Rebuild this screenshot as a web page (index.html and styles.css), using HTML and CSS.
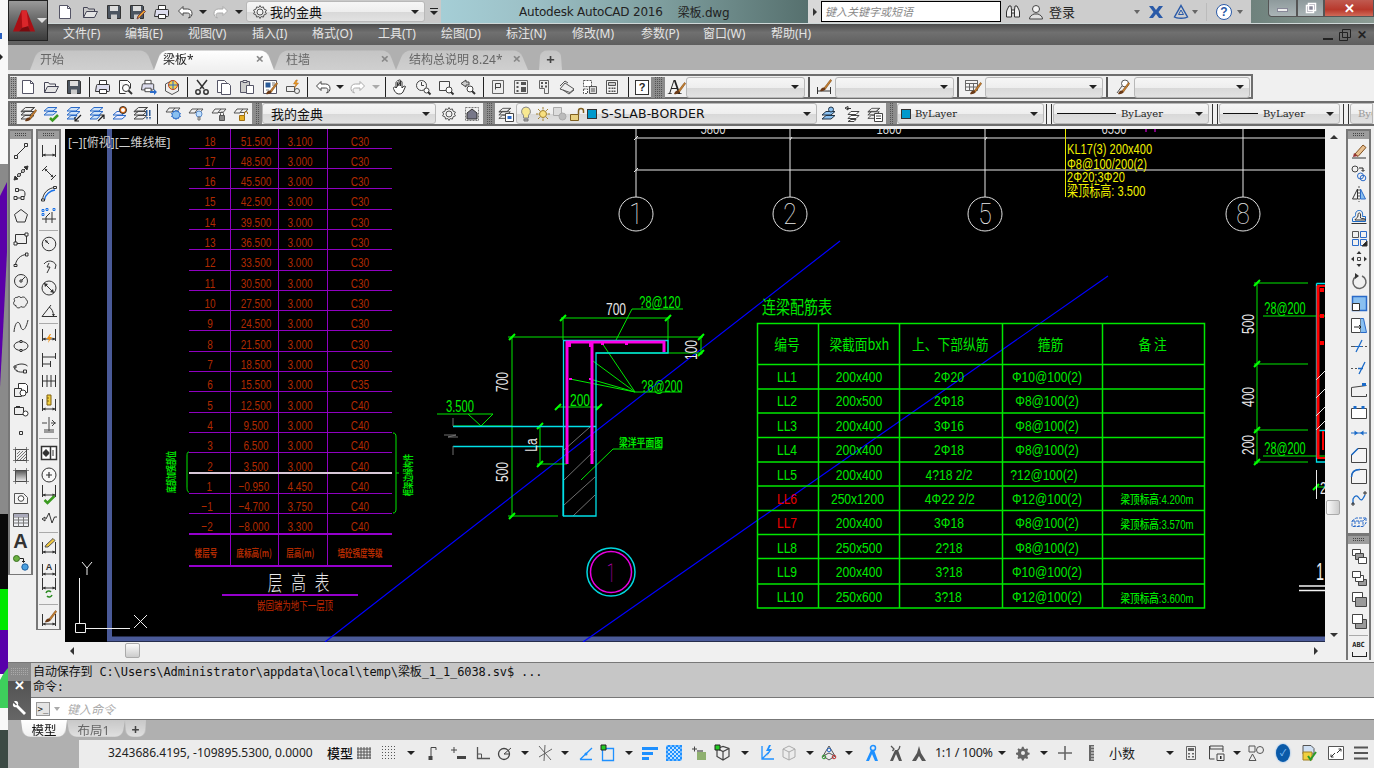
FILE: index.html
```html
<!DOCTYPE html>
<html lang="zh">
<head>
<meta charset="utf-8">
<title>Autodesk AutoCAD 2016 梁板.dwg</title>
<link rel="stylesheet" href="styles.css">
</head>
<body>
<svg class="defs" width="0" height="0">
  <symbol id="new" viewBox="0 0 16 16"><path d="M2.500 1.500h8l3 3v10h-11z" fill="#fff" stroke="#556"/><path d="M10.500 1.500v3h3" stroke="#556"/></symbol>
  <symbol id="open" viewBox="0 0 16 16"><path d="M1.500 13.500v-10h4l1 1.500h6v2.500" stroke="#445"/><path d="M1.500 13.500l3-6h11l-3 6z" fill="#e4e4e4" stroke="#445"/></symbol>
  <symbol id="save" viewBox="0 0 16 16"><path d="M1.500 1.500h12l1 1v12h-13z" fill="#4c5560" stroke="#333"/><path d="M4 2h8v5H4z" fill="#ddd" stroke="none"/><path d="M5 10.500h6V15H5z" fill="#ccc" stroke="none"/></symbol>
  <symbol id="print" viewBox="0 0 16 16"><path d="M4.500 6V1.500h7V6" fill="#fff"/><path d="M1.500 6.500q0-1 1-1h11q1 0 1 1v5q0 1-1 1h-13z" fill="#dde"/><path d="M4.500 10.500h7v4h-7z" fill="#fff"/></symbol>
  <symbol id="undo" viewBox="0 0 16 16"><path d="M6 2.500L1.500 7 6 11.500V9h4.500c1.500 0 2.500.8 2.500 2s-.5 2-1.500 3c2.500-.5 3.500-2.500 3.500-4.500 0-3-2-4.500-4.500-4.500H6z" fill="#fff" stroke="#444"/></symbol>
  <symbol id="redo" viewBox="0 0 16 16"><path d="M10 2.500L14.500 7 10 11.500V9H5.500C4 9 3 9.800 3 11s.5 2 1.500 3C2 13.500 1 11.500 1 9.500c0-3 2-4.500 4.500-4.500H10z" fill="#fff" stroke="#aaa"/></symbol>
  <symbol id="gear" viewBox="0 0 16 16"><circle cx="8" cy="8" r="3" fill="#f0f0f0" stroke="#555"/><path d="M8 1.500l1.200 2 2.200-.6.600 2.200 2.500 1.100-1.200 1.800 1.200 1.800-2.500 1.100-.6 2.200-2.200-.6L8 14.500l-1.200-2-2.200.6-.6-2.200-2.500-1.100L2.700 8 1.500 6.200 4 5.100l.6-2.200 2.200.6z" stroke="#555"/></symbol>
  <symbol id="stack" viewBox="0 0 16 16"><path d="M5.500 1.500h9l-4 3.500h-9zM1.500 5l-.5.800 4 0M10.500 5l4-3.500M5 5.500h9l-4 3.500H1z" stroke="#444" fill="#eee"/><path d="M5 9.500h9l-4 3.500H1z" stroke="#444" fill="#eee"/></symbol>
  <symbol id="layb" viewBox="0 0 16 16"><path d="M7 9.500l3-3.500h5l-3 3.500z" fill="#eee" stroke="#555"/><path d="M1 10l3-4h6" stroke="#555"/><path d="M1 10h6" stroke="#555"/></symbol>
  <symbol id="dimf" viewBox="0 0 16 16"><path d="M1.500 2v12M14.500 2v12M1.500 12h13" stroke="#333"/><path d="M1.500 12l3-1.500v3zM14.500 12l-3-1.500v3z" fill="#333" stroke="none"/></symbol>
  <symbol id="brush" viewBox="0 0 16 16"><path d="M8 12l6.500-8.500 1.200 1L9.500 13z" fill="#c9802e" stroke="#7a4a18" stroke-width=".6"/><path d="M4 15c1-2 1.500-3.500 4-3.500 1 .5 1.500 1.200 1.500 2C8 15 6 15.500 4 15z" fill="#6b3a17" stroke="none"/></symbol>
</svg>

<aside class="desk">
  <svg width="8" height="768" viewBox="0 0 8 768">
    <path d="M0 0h8v768H0z" fill="#f8f8f8"/>
    <path d="M0 164h8v350H0z" fill="#8a8a8a"/>
    <path d="M0 196L7 182v70l-4 80-3 55z" fill="#5a00a8"/>
    <path d="M0 514h8v75H0z" fill="#0a0a0a"/>
    <path d="M0 589h8v41H0z" fill="#00e800"/>
    <path d="M0 630h8v44H0z" fill="#5800aa"/>
    <path d="M0 680Q4 672 8 668v40H0z" fill="#3ecf5c"/>
    <path d="M0 730h8v38H0z" fill="#3c4a44"/>
    <path d="M0 33h2v6H0z" fill="#2a60c0"/>
    <path d="M0 54l3 3-3 3z" fill="#222"/>
  </svg>
</aside>

<div class="app">
  <div class="logo">
    <svg width="26" height="26" viewBox="0 0 26 26"><path d="M0 25L9.500 1h6L25 25h-5.500L17 19l-7 2-3 4z" fill="#a80f14"/><path d="M9.500 1h6l2 18-7 2z" fill="#d9262a"/><path d="M7 25l3-4 7-2 2.500 6z" fill="#7a0a0e"/></svg>
    <i class="c lite"></i>
  </div>

  <header class="titlebar">
    <div class="qat">
      <svg class="i b16"><use href="#new"/></svg>
      <svg class="i b16"><use href="#open"/></svg>
      <svg class="i b16"><use href="#save"/></svg>
      <svg class="i b16" viewBox="0 0 16 16"><use href="#save" width="16" height="16"/><path d="M8 15l1-3 6-6 1.500 1.500-6 6z" fill="#e8a030" stroke="#744"/></svg>
      <svg class="i b16"><use href="#print"/></svg>
      <svg class="i b16"><use href="#undo"/></svg>
      <i class="c"></i>
      <svg class="i b16"><use href="#redo"/></svg>
      <i class="c"></i>
      <div class="combo qcombo"><svg class="i"><use href="#gear"/></svg><span>我的金典</span><i class="c"></i></div>
      <span class="qmore"><i class="bar"></i><i class="c"></i></span>
    </div>
    <div class="wintitle"><span>Autodesk AutoCAD 2016</span><span>梁板.dwg</span></div>
    <div class="info">
      <span class="arrowbox"><i class="tri-r"></i></span>
      <span class="search">键入关键字或短语</span>
      <svg class="i ibino" viewBox="0 0 16 16"><path d="M2 6l2-4h2l.5 4v7h-5v-5zM14 6l-2-4h-2l-.5 4v7h5v-5zM6.500 6h3v3h-3z" fill="#eee" stroke="#333"/></svg>
      <svg class="i iuser" viewBox="0 0 16 16"><circle cx="8" cy="5" r="3.500" fill="#f4f4f4" stroke="#444"/><path d="M1.500 15c0-3 2.500-4 4.500-5h4c2 1 4.500 2 4.500 5z" fill="#e0e0e0" stroke="#444"/></svg>
      <span class="login">登录</span>
      <i class="c c1"></i>
      <svg class="i ix" viewBox="0 0 16 16"><path d="M1 2h4l3 4 3-4h4l-4.500 6L15 14h-4l-3-4-3 4H1l4.500-6z" fill="#2a5aa8" stroke="none"/></svg>
      <svg class="i ia" viewBox="0 0 16 16"><path d="M8 1.500L14.500 13c-2 1.500-11 1.500-13 0z" stroke="#2a5aa8" stroke-width="1.500"/><path d="M8 6l2.500 4.500h-5z" stroke="#2a5aa8"/></svg>
      <i class="c c2"></i>
      <i class="vsep"></i>
      <span class="qhelp">?</span>
      <i class="c c3"></i>
    </div>
    <div class="winctrl">
      <span class="wbtn wmin"><i></i></span>
      <span class="wbtn wres"><svg width="12" height="12" viewBox="0 0 12 12"><path d="M3.500 1.500h7v7h-7zM1.500 3.500h7v7h-7z" stroke="#fff" stroke-width="1.500" fill="#889"/></svg></span>
      <span class="wbtn wclose">✕</span>
    </div>
  </header>

  <nav class="menubar">
    <span class="m">文件(F)</span><span class="m">编辑(E)</span><span class="m">视图(V)</span><span class="m">插入(I)</span><span class="m">格式(O)</span><span class="m">工具(T)</span><span class="m">绘图(D)</span><span class="m">标注(N)</span><span class="m">修改(M)</span><span class="m">参数(P)</span><span class="m">窗口(W)</span><span class="m">帮助(H)</span>
    <span class="mdi"><i class="mdi-min"></i><svg width="12" height="12" viewBox="0 0 12 12"><path d="M3.500 .5h8v8h-8zM.5 3.500h8v8h-8z" stroke="#222" fill="none"/></svg><b>✕</b></span>
  </nav>

  <div class="tabbar">
    <div class="tab t0"><span>开始</span></div>
    <div class="tab t1 on"><span>梁板*</span><em>×</em></div>
    <div class="tab t2"><span>柱墙</span><em>×</em></div>
    <div class="tab t3"><span>结构总说明 8.24*</span><em>×</em></div>
    <div class="tab t4"><strong>+</strong></div>
  </div>

  <div class="tbarea">
    <div class="tb row1">
      <i class="grip"></i>
      <svg class="i"><use href="#new"/></svg>
      <svg class="i"><use href="#open"/></svg>
      <svg class="i"><use href="#save"/></svg>
      <i class="s"></i>
      <svg class="i"><use href="#print"/></svg>
      <svg class="i" viewBox="0 0 16 16"><path d="M2.500 1.500h8l3 3v5M2.500 1.500v13h6" fill="#fff"/><circle cx="9" cy="9" r="3.500" fill="#fff"/><path d="M11.500 11.500l3.500 3.500" stroke-width="2"/></svg>
      <svg class="i" viewBox="0 0 16 16"><use href="#print" width="14" height="14"/><path d="M9 12h4v-2l3 3-3 3v-2H9z" fill="#2a6ac8" stroke="none"/></svg>
      <svg class="i" viewBox="0 0 16 16"><path d="M1.500 5l6.500-3.500L14.500 5v7L8 15.500 1.500 12z" fill="#eee" stroke="#555"/><circle cx="9" cy="6" r="4.500" fill="#f0d050" stroke="#c04020"/><path d="M9 2v8M5 6h8" stroke="#2a6ac8"/></svg>
      <i class="s"></i>
      <svg class="i" viewBox="0 0 16 16"><path d="M3 1l7 9M13 1L6 10" stroke-width="1.500"/><circle cx="4" cy="13" r="2.200" stroke-width="1.500"/><circle cx="12" cy="13" r="2.200" stroke-width="1.500"/></svg>
      <svg class="i" viewBox="0 0 16 16"><path d="M1.500 1.500h7l2 2v10h-9z" fill="#fff" stroke="#556"/><path d="M5.500 4.500h7l2 2v9h-9z" fill="#fff" stroke="#556"/></svg>
      <svg class="i" viewBox="0 0 16 16"><path d="M1.500 2.500h9v11h-9z" fill="#ccc" stroke="#556"/><path d="M4 1.500h4v2H4z" fill="#eee" stroke="#556"/><path d="M7.500 6.500h7v8h-7z" fill="#fff" stroke="#556"/></svg>
      <svg class="i" viewBox="0 0 16 16"><path d="M1.500 1.500h13v13h-13z" fill="#fff" stroke="#556"/><path d="M3.500 3.500h5v5h-5z" fill="#2a5a98" stroke="none"/><path d="M10 4h3M10 6h3M4 11h3" stroke="#777"/><use href="#brush" width="16" height="16"/></svg>
      <svg class="i" viewBox="0 0 16 16"><path d="M1.500 7.500h8v5h-8z" fill="#eee" stroke="#555"/><circle cx="12" cy="12" r="2.500" stroke="#555"/><path d="M11 1L8.500 5H11L9.500 9l4-5h-2.500l1.500-3z" fill="#f0a020" stroke="#b06010" stroke-width=".5"/></svg>
      <i class="s"></i>
      <svg class="i"><use href="#undo"/></svg>
      <i class="c"></i>
      <svg class="i"><use href="#redo"/></svg>
      <i class="c dim"></i>
      <i class="s"></i>
      <svg class="i" viewBox="0 0 16 16"><path d="M4 9V3.500c0-1 1.500-1 1.500 0V7m0-5c0-1 1.500-1 1.500 0v5m0-5.500c0-1 1.500-1 1.500 0V7m0-4c0-1 1.500-1 1.500 0v6c1-1.500 3-2.500 3.500-1.500L11 13c-1 2-4 2.500-6 1.500S2 11 1.500 9.500c-.5-1.500 1.500-2 2.500-.5z" fill="#fff" stroke="#333"/></svg>
      <svg class="i" viewBox="0 0 16 16"><circle cx="6.500" cy="6.500" r="5" fill="#f4f4f4" stroke="#444"/><path d="M6.500 3v3.500H9" stroke="#444"/><circle cx="11.500" cy="11.500" r="2.500" fill="#fff" stroke="#444"/><path d="M13 13l2.500 2.500" stroke-width="2"/></svg>
      <svg class="i" viewBox="0 0 16 16"><path d="M1.500 2.500h10v9h-10z" fill="#f4f4f4" stroke="#444"/><circle cx="11" cy="11" r="3" fill="#fff" stroke="#444"/><path d="M13 13l2.500 2.500" stroke-width="2"/></svg>
      <svg class="i" viewBox="0 0 16 16"><path d="M6 1L1 4.500 6 8V6h3v-3H6z" fill="#ccc" stroke="#444"/><circle cx="10" cy="10" r="3" fill="#fff" stroke="#444"/><path d="M12 12l3 3" stroke-width="2"/></svg>
      <i class="s"></i>
      <svg class="i" viewBox="0 0 16 16"><path d="M2.500 1.500h11v13h-11z" fill="#eee" stroke="#666"/><path d="M5.500 4.500h5v4h-5M5.500 4.500v6" stroke="#444"/></svg>
      <svg class="i" viewBox="0 0 16 16"><path d="M1.500 1.500h13v13h-13z" fill="#eee" stroke="#666"/><path d="M3.500 3h2v2h-2zM3.500 7h2v2h-2zM3.500 11h2v2h-2zM8 3h5v3H8zM8 8h5v5H8z" fill="#555" stroke="none"/></svg>
      <svg class="i" viewBox="0 0 16 16"><path d="M3.500 1.500h9v13h-4v-5h-5z" fill="#eee" stroke="#666"/><path d="M5 3h2v2H5zM9 3h2v2H9zM5 6.500h2v2H5zM9 6.500h2v2H9z" fill="#555" stroke="none"/></svg>
      <svg class="i" viewBox="0 0 16 16"><path d="M1 10l5-6 9 6-4 3.500z" fill="#eee" stroke="#555"/><path d="M1 7l5-5 3 2M4 11l6 4 5-4" stroke="#555"/></svg>
      <svg class="i" viewBox="0 0 16 16"><path d="M1.500 1.500h8v6h-8zM1.500 10h4v4.500h-4z" fill="#fff" stroke="#555" stroke-dasharray="2 1"/><path d="M7.500 7.500h7v7h-7z" fill="#ddd" stroke="#555"/><path d="M9 10h4M9 12h4" stroke="#555"/></svg>
      <svg class="i" viewBox="0 0 16 16"><path d="M2.500 1.500h11v13h-11z" fill="#f4f4f4" stroke="#555"/><path d="M4.500 3.500h7v3h-7z" fill="#ccc" stroke="#555"/><path d="M4.500 8.500h2v1.500h-2zM7.500 8.500h2v1.500h-2zM10 8.500h1.500v1.500H10zM4.500 11.500h2V13h-2zM7.500 11.500h2V13h-2zM10 11.500h1.500V13H10z" fill="#555" stroke="none"/></svg>
      <i class="s"></i>
      <span class="helpbox">?</span>
      <i class="grip2"></i>
      <span class="glyph">A<svg class="over" width="16" height="16"><use href="#brush"/></svg></span>
      <div class="combo"><i class="c"></i></div>
      <i class="s s2"></i>
      <svg class="i" viewBox="0 0 16 16"><path d="M1.500 8v7M14.500 8v7M1.500 12h13" stroke="#333"/><use href="#brush" width="16" height="16" y="-3"/></svg>
      <div class="combo"><i class="c"></i></div>
      <i class="s s2"></i>
      <svg class="i" viewBox="0 0 16 16"><path d="M.5 1.500h12v10H.5z" fill="#f4f4f4" stroke="#666"/><path d="M.5 1.500h12v3H.5zM4.500 4.500v7M8.500 4.500v7M.5 8h12" stroke="#666"/><use href="#brush" width="16" height="16" x="1"/></svg>
      <div class="combo"><i class="c"></i></div>
      <i class="s s2"></i>
      <svg class="i" viewBox="0 0 16 16"><circle cx="11" cy="4.500" r="3.500" fill="#fff" stroke="#555"/><path d="M8 7l-5 7" stroke="#555"/><use href="#brush" width="16" height="16"/></svg>
      <div class="combo"><i class="c"></i></div>
    </div>

    <div class="tb row2">
      <i class="grip"></i>
      <svg class="i" viewBox="0 0 16 16"><use href="#stack" width="16" height="16"/><use href="#brush" width="16" height="16" x="1"/></svg>
      <svg class="i" viewBox="0 0 16 16"><g stroke="#2a6ac8"><path d="M5 1.500h9l-4 3.500H1zM5 5.500h9l-4 3.500H1z" fill="#cfe3f8"/></g><path d="M7 12l2.500 2.500L15 9" stroke="#3a9a20" stroke-width="2.500"/></svg>
      <svg class="i" viewBox="0 0 16 16"><g stroke="#2a6ac8"><path d="M5 1.500h9l-4 3.500H1zM5 5.500h9l-4 3.500H1zM5 9.500h6L8 13H1z" fill="#cfe3f8"/></g><path d="M15 9l-6 6m0-4v4h4" stroke="#222" stroke-width="1.200"/></svg>
      <svg class="i" viewBox="0 0 16 16"><g stroke="#2a6ac8"><path d="M5 1.500h9l-4 3.500H1zM5 5.500h9l-4 3.500H1zM5 9.500h6L8 13H1z" fill="#cfe3f8"/></g><path d="M9 15l6-6m-4 0h4v4" stroke="#222" stroke-width="1.200"/></svg>
      <svg class="i" viewBox="0 0 16 16"><g stroke="#2a6ac8"><path d="M5 5.500h9l-4 3.500H1zM5 9.500h9l-4 3.500H1z" fill="#eef"/></g><circle cx="11" cy="4" r="3.500" fill="#f07010"/><circle cx="11" cy="4" r="2" fill="#fff" stroke="none"/></svg>
      <svg class="i" viewBox="0 0 16 16"><use href="#stack" width="16" height="16" x="-2"/><path d="M11 4h1.500v6H11zM14 4h1.500v6H14zM11 11l1 3 1-3zM14 11l1 3 1-3z" fill="#2a5a98" stroke="none"/></svg>
      <i class="s"></i>
      <svg class="i" viewBox="0 0 16 16"><use href="#layb" width="16" height="16" y="-4"/><path d="M11 8l.8 1.500 1.600-.4.400 1.600 1.700.8-1.100 1.500 1.100 1.500-1.700.5-.4 1.500-1.600-.4-.8 1.400-.8-1.400-1.600.4-.4-1.500-1.700-.5 1.100-1.500-1.100-1.500 1.700-.8.400-1.600 1.600.4z" fill="#8ac0f0" stroke="#2a6ac8" transform="translate(0 -4)"/></svg>
      <svg class="i" viewBox="0 0 16 16"><use href="#layb" width="16" height="16" y="-3"/><circle cx="11" cy="8" r="3" fill="#bfe0ff" stroke="#5a8ac8"/><path d="M10 11h2v3h-2z" fill="#ccc" stroke="#777"/></svg>
      <svg class="i" viewBox="0 0 16 16"><use href="#layb" width="16" height="16" y="-3"/><path d="M8.500 9.500h5v5h-5z" fill="#888" stroke="#555"/><path d="M9.500 9.500v-2a1.500 1.500 0 013 0v2" stroke="#555"/></svg>
      <svg class="i" viewBox="0 0 16 16"><use href="#layb" width="16" height="16" y="-3"/><path d="M6.500 9.500h5v5h-5z" fill="#e8b020" stroke="#a07010"/><path d="M11.500 9.500v-2.500a1.500 1.500 0 013 0v1" stroke="#a07010"/></svg>
      <i class="grip2"></i>
      <div class="combo tcombo"><span>我的金典</span><i class="c"></i></div>
      <svg class="i"><use href="#gear"/></svg>
      <svg class="i" viewBox="0 0 16 16"><path d="M1.500 1.500h13v13h-13z" stroke="#777" stroke-dasharray="2 1"/><path d="M3 7l5-4 5 4v6H3z" fill="#778"/></svg>
      <i class="grip2"></i>
      <svg class="i" viewBox="0 0 16 16"><use href="#stack" width="14" height="14" y="1"/><path d="M7.500 7.500h8v8h-8z" fill="#fff" stroke="#444"/><path d="M9.500 10h4v3h-4z" fill="#2a6ac8" stroke="none"/></svg>
      <div class="combo lcombo">
        <svg class="i" viewBox="0 0 16 16"><path d="M8 1a4.500 4.500 0 00-2.500 8.200V12h5V9.200A4.500 4.500 0 008 1z" fill="#f8e890" stroke="#888"/><path d="M6 13h4v2H6z" fill="#aaa" stroke="#777"/></svg>
        <svg class="i" viewBox="0 0 16 16"><circle cx="8" cy="8" r="3.500" fill="#f8e080" stroke="#a08030"/><path d="M8 1v2.500M8 12.500V15M1 8h2.500M12.500 8H15M3 3l1.800 1.800M11.200 11.200L13 13M13 3l-1.800 1.800M4.800 11.200L3 13" stroke="#a08030"/></svg>
        <svg class="i" viewBox="0 0 16 16"><path d="M1.500 1.500h8v8h-8z" fill="#ddd" stroke="#aaa"/><circle cx="10.500" cy="10.500" r="3.500" fill="#bbb" stroke="#aaa"/></svg>
        <svg class="i" viewBox="0 0 16 16"><path d="M1.500 8.500h8v6h-8z" fill="#e8d080" stroke="#806020"/><path d="M9.500 8.500V5a2.500 2.500 0 015 0v2" stroke="#806020" stroke-width="1.500"/></svg>
        <i class="sw"></i>
        <span class="laytxt">S-SLAB-BORDER</span>
        <i class="c"></i>
      </div>
      <svg class="i" viewBox="0 0 16 16"><g stroke="#234"><path d="M5 5.500h9l-4 3.500H1zM5 9.500h9l-4 3.500H1z" fill="#8ac0f0"/></g><circle cx="10" cy="3.500" r="2.500" fill="#8ac0f0" stroke="#234"/></svg>
      <svg class="i" viewBox="0 0 16 16"><path d="M7 5.500h8l-3 3H4zM7 9.500h8l-3 3H4zM7 13.500h5l-2 2H4z" fill="#fff" stroke="#444"/><path d="M1 2l3-1.500V4zM3 2.500h4" stroke="#333"/></svg>
      <svg class="i" viewBox="0 0 16 16"><use href="#stack" width="14" height="14" y="1"/><path d="M7.500 7.500h8v8h-8z" fill="#fff" stroke="#444"/><path d="M9 10h5M9 12.500h5" stroke="#444"/></svg>
      <i class="grip2"></i>
      <div class="combo bcombo"><i class="sw"></i><span>ByLayer</span><i class="c"></i></div>
      <i class="s dbl"></i>
      <div class="combo bcombo"><i class="ln l60"></i><span>ByLayer</span><i class="c"></i></div>
      <i class="s dbl"></i>
      <div class="combo bcombo"><i class="ln l35"></i><span>ByLayer</span><i class="c"></i></div>
      <i class="s dbl"></i>
      <div class="combo bcombo off"><span>ByColor</span></div>
    </div>
  </div>

  <div class="work">
    <div class="leftdock">
      <div class="vbar">
        <i class="hgrip"></i>
        <svg class="i" viewBox="0 0 16 16"><path d="M3 13L13 3"/><path d="M1.500 12.500h3v3h-3zM11.500.5h3v3h-3z" fill="#eee"/></svg>
        <svg class="i" viewBox="0 0 16 16"><path d="M2 14L14 2"/><circle cx="6" cy="10" r="1.500" fill="#eee"/><circle cx="10" cy="6" r="1.500" fill="#eee"/><path d="M1 15l1-4 3 3zM15 1l-4 1 3 3z" fill="#333"/></svg>
        <svg class="i" viewBox="0 0 16 16"><path d="M3 12h6M5 4h4c4 0 4 8 0 8"/><path d="M1 10.500h3v3H1zM2.500 2.500h3v3h-3zM8 10.500h3v3H8z" fill="#eee"/></svg>
        <svg class="i" viewBox="0 0 16 16"><path d="M8 1.500l6.500 5-2.500 7.500H4L1.500 6.500z" fill="#eee"/></svg>
        <svg class="i" viewBox="0 0 16 16"><path d="M2.500 4.500h11v9h-11z" fill="#eee"/><path d="M12 3h3v3h-3zM1 12h3v3H1z" fill="#fff"/></svg>
        <svg class="i" viewBox="0 0 16 16"><path d="M2.500 14C3 8 8 4 13 3.500"/><path d="M1 13.500h3v2H1zM12.500 2h2.500v3h-2.500z" fill="#eee"/></svg>
        <svg class="i" viewBox="0 0 16 16"><circle cx="8" cy="8" r="6.500" fill="#eee"/><path d="M8 8l4-4"/><path d="M7 7h2v2H7z" fill="#fff"/></svg>
        <svg class="i" viewBox="0 0 16 16"><path d="M4 2.500c1.500-1.500 3.500-1 4 .5 1-1.500 4.500-1.500 5 1.500 2 1 2 4 0 5 0 2.500-3 3.500-5 2-1 2-5 2-5-1-3 0-3-4-1-4.500-2-2 0-4 2-3.500z" fill="#eee"/></svg>
        <svg class="i" viewBox="0 0 16 16"><path d="M1 15C2 4 6 3 7.500 9s5 5 7.500-6"/></svg>
        <svg class="i" viewBox="0 0 16 16"><ellipse cx="8" cy="8" rx="7" ry="4.500" fill="#eee"/><path d="M7 2.500h2v2H7zM7 11.500h2v2H7z" fill="#fff"/></svg>
        <svg class="i" viewBox="0 0 16 16"><path d="M13 11.500C5 13.500 1 10 1.500 7.500 2 4 11 2.500 14.500 6"/><path d="M3 9.500l1.500 1.500" /><path d="M10.500 10h3v3h-3zM1 6h2v2H1z" fill="#eee"/></svg>
        <svg class="i" viewBox="0 0 16 16"><path d="M5.500 1.500h7l2 2v7h-9z" fill="#fff"/><path d="M1.500 6.500h7v8h-7z" fill="#eee"/><circle cx="10" cy="11" r="3" fill="#fff"/></svg>
        <svg class="i" viewBox="0 0 16 16"><path d="M1.500 4.500h9v7h-9z" fill="#eee"/><circle cx="12.500" cy="10.500" r="2.500" fill="#fff"/><path d="M3 3.500h4"/></svg>
        <svg class="i" viewBox="0 0 16 16"><path d="M6.500 6.500h3v3h-3z"/></svg>
        <svg class="i" viewBox="0 0 16 16"><path d="M2.500 2.500h11v11h-11z" fill="#eee"/><path d="M4 7l3-3M4 10l6-6M4 13l9-9M7 13l6-6M10 13l3-3" stroke="#777"/><path d="M0 2.500h16M2.500 0v16M13.500 0v16M0 13.500h16" stroke="#555" stroke-width=".7"/></svg>
        <svg class="i" viewBox="0 0 16 16"><defs><linearGradient id="gr" x1="0" y1="0" x2="0" y2="1"><stop offset="0" stop-color="#555"/><stop offset="1" stop-color="#eee"/></linearGradient></defs><path d="M2.500 2.500h11v11h-11z" fill="url(#gr)"/><path d="M0 2.500h16M2.500 0v16M13.500 0v16M0 13.500h16" stroke="#555" stroke-width=".7"/></svg>
        <svg class="i" viewBox="0 0 16 16"><path d="M1.500 3.500h9l4 4v6h-13z" fill="#f4f4f4" stroke="#555"/><circle cx="8" cy="8.500" r="2.800" fill="#fff" stroke="#444"/></svg>
        <svg class="i" viewBox="0 0 16 16"><path d="M.5 1.500h15v13H.5z" fill="#eef0f4" stroke="#555"/><path d="M.5 5h15M.5 8h15M.5 11h15M5.500 5v9.500M10.500 5v9.500" stroke="#777"/><path d="M1 2h14v3H1z" fill="#aab" stroke="none"/></svg>
        <span class="bigA">A</span>
        <svg class="i" viewBox="0 0 16 16"><circle cx="3.500" cy="3.500" r="3" fill="#6ab040" stroke="#3a7020"/><path d="M7 3.500h3.500V7m-1.500-1l1.500 1.500L12 6" stroke="#222"/><circle cx="12" cy="12" r="3.200" fill="#4aa0e0" stroke="#2060a0"/></svg>
      </div>
      <div class="vbar">
        <i class="hgrip"></i>
        <svg class="i"><use href="#dimf"/></svg>
        <svg class="i" viewBox="0 0 16 16"><path d="M1 6l5-5M10 15l5-5M3.500 3.500l9 9"/><path d="M3.500 3.500l3 1-2 2zM12.500 12.500l-3-1 2-2z" fill="#333" stroke="none"/></svg>
        <svg class="i" viewBox="0 0 16 16"><path d="M1.500 14C2 7 7 2 14 1.500"/><path d="M3.500 14C4 9 9 4.500 14 4" stroke="#1a72e8" stroke-width="1.500"/><path d="M.5 13h3v2h-3zM12.500.5h3v2h-3z" fill="#eee"/></svg>
        <svg class="i" viewBox="0 0 16 16"><path d="M5 15V9M1 11h14M11 15V4M5 9l4-4" /><path d="M1 1.500h2v2H1zM5 .5h2v2H5zM12 .5h2v2h-2zM1 5.500h2v2H1z" stroke="#1a72e8"/></svg>
        <i class="vs"></i>
        <svg class="i" viewBox="0 0 16 16"><circle cx="8" cy="8" r="6.800" fill="#eee"/><path d="M8 8L4 4"/><path d="M4 4l3 1-2 2z" fill="#333" stroke="none"/></svg>
        <svg class="i" viewBox="0 0 16 16"><path d="M3 6A7 7 0 0 1 15 7M15 7l-1 4M8 5L6 9h3l-3 6"/></svg>
        <svg class="i" viewBox="0 0 16 16"><circle cx="8" cy="8" r="7" fill="#eee"/><path d="M3 3l10 10"/><path d="M3 3l4 1-3 3zM13 13l-4-1 3-3z" fill="#333" stroke="none"/></svg>
        <svg class="i" viewBox="0 0 16 16"><path d="M1 14.500h15M1 14.500L10 3M8 5c3 1.500 4.500 5 4.500 9.500"/><path d="M11 12l1.500 2.500 1.500-2.500z" fill="#333" stroke="none"/></svg>
        <i class="vs"></i>
        <svg class="i" viewBox="0 0 16 16"><use href="#dimf" width="16" height="16" y="-3"/><path d="M9 4L5.500 9H8l-1 4 4-6H8.500L10 4z" fill="#f09010" stroke="none"/></svg>
        <svg class="i" viewBox="0 0 16 16"><path d="M1.500 1v14M1.500 5h13M1.500 12h8M14.500 1v6M9.500 9v6"/></svg>
        <svg class="i" viewBox="0 0 16 16"><path d="M1.500 2v12M6 2v12M10 2v12M14.500 2v12M1.500 8h13"/></svg>
        <svg class="i" viewBox="0 0 16 16"><use href="#dimf" width="16" height="16" y="2"/><path d="M6 0h4v10H6z" fill="#f0d040" stroke="#806010"/><path d="M6 3h2M6 6h2" stroke="#806010"/></svg>
        <svg class="i" viewBox="0 0 16 16"><path d="M8 0v14M3 13h10M3 15h10M1 6h5M10 6h5M11 3l3 3-3 3" stroke="#444"/></svg>
        <i class="vs"></i>
        <svg class="i" viewBox="0 0 16 16"><path d="M.5 1.500h15v13H.5zM9.500 1.500v13" fill="#fff" stroke-width="1.500"/><circle cx="5" cy="8" r="2.500" fill="#333"/><path d="M5 4v8M1.500 8h7" /><path d="M12 5v6"/></svg>
        <svg class="i" viewBox="0 0 16 16"><circle cx="8" cy="8" r="7" fill="#f8f8f8"/><path d="M8 5v6M5 8h6" stroke-width="1.200"/></svg>
        <svg class="i" viewBox="0 0 16 16"><use href="#dimf" width="16" height="16" y="-5"/><path d="M3.500 12l3 3 7-7" stroke="#3a9a20" stroke-width="2.500"/></svg>
        <svg class="i" viewBox="0 0 16 16"><path d="M5 9l3-6 3 10 2.500-6h2.500M1 9l3-2v4z"/></svg>
        <i class="vs"></i>
        <svg class="i" viewBox="0 0 16 16"><use href="#dimf" width="16" height="16" y="2"/><path d="M4 9l1-2 7-6.500 2 2L7 9z" fill="#f0c840" stroke="#555"/></svg>
        <svg class="i" viewBox="0 0 16 16"><use href="#dimf" width="16" height="16" y="2"/><text x="8" y="10" class="mini">A</text></svg>
        <svg class="i" viewBox="0 0 16 16"><use href="#dimf" width="16" height="16" y="-6"/><path d="M5 11a3 3 0 015-1M11 13a3 3 0 01-5 1" stroke="#2a8a20" stroke-width="1.500"/></svg>
        <i class="vs"></i>
        <svg class="i" viewBox="0 0 16 16"><use href="#dimf" width="16" height="16" y="2"/><use href="#brush" width="16" height="16" y="-3"/></svg>
      </div>
    </div>

    <div class="center">
      <div class="viewrow">
        <svg class="cad" width="1260" height="513" viewBox="65 129 1260 513">
          <rect x="65" y="129" width="1260" height="513" fill="#000"/>
          <path d="M109.500 129V639H1325" class="frame"/>

          <!-- storey table -->
          <path class="pu" d="M189 148.500H392M189 168.500H392M189 188.500H392M189 209.500H392M189 229.500H392M189 249.500H392M189 270.500H392M189 290.500H392M189 310.500H392M189 330.500H392M189 351.500H392M189 371.500H392M189 391.500H392M189 412.500H392M189 432.500H392M189 452.500H392M189 493.500H392M189 513.500H392M230.500 129V566M278.500 129V566M327.500 129V566"/>
          <path class="pu2" d="M189 534H392M189 566H392M222 595H358"/>
          <path d="M189 473H392" class="wl"/>
          <text class="fl" transform="matrix(.74 0 0 1 210 0)"><tspan x="0" y="146">18</tspan><tspan x="0" y="166">17</tspan><tspan x="0" y="186">16</tspan><tspan x="0" y="206">15</tspan><tspan x="0" y="227">14</tspan><tspan x="0" y="247">13</tspan><tspan x="0" y="267">12</tspan><tspan x="0" y="288">11</tspan><tspan x="0" y="308">10</tspan><tspan x="0" y="328">9</tspan><tspan x="0" y="349">8</tspan><tspan x="0" y="369">7</tspan><tspan x="0" y="389">6</tspan><tspan x="0" y="410">5</tspan><tspan x="0" y="430">4</tspan><tspan x="0" y="450">3</tspan><tspan x="0" y="471">2</tspan><tspan x="-1" y="491">1</tspan><tspan x="-4" y="511">−1</tspan><tspan x="-4" y="531">−2</tspan></text>
          <text class="fl" transform="matrix(.74 0 0 1 256 0)"><tspan x="0" y="146">51.500</tspan><tspan x="0" y="166">48.500</tspan><tspan x="0" y="186">45.500</tspan><tspan x="0" y="206">42.500</tspan><tspan x="0" y="227">39.500</tspan><tspan x="0" y="247">36.500</tspan><tspan x="0" y="267">33.500</tspan><tspan x="0" y="288">30.500</tspan><tspan x="0" y="308">27.500</tspan><tspan x="0" y="328">24.500</tspan><tspan x="0" y="349">21.500</tspan><tspan x="0" y="369">18.500</tspan><tspan x="0" y="389">15.500</tspan><tspan x="0" y="410">12.500</tspan><tspan x="0" y="430">9.500</tspan><tspan x="0" y="450">6.500</tspan><tspan x="0" y="471">3.500</tspan><tspan x="-3" y="491">−0.950</tspan><tspan x="-3" y="511">−4.700</tspan><tspan x="-3" y="531">−8.000</tspan></text>
          <text class="fl" transform="matrix(.74 0 0 1 300 0)"><tspan x="0" y="146">3.100</tspan><tspan x="0" y="166">3.000</tspan><tspan x="0" y="186">3.000</tspan><tspan x="0" y="206">3.000</tspan><tspan x="0" y="227">3.000</tspan><tspan x="0" y="247">3.000</tspan><tspan x="0" y="267">3.000</tspan><tspan x="0" y="288">3.000</tspan><tspan x="0" y="308">3.000</tspan><tspan x="0" y="328">3.000</tspan><tspan x="0" y="349">3.000</tspan><tspan x="0" y="369">3.000</tspan><tspan x="0" y="389">3.000</tspan><tspan x="0" y="410">3.000</tspan><tspan x="0" y="430">3.000</tspan><tspan x="0" y="450">3.000</tspan><tspan x="0" y="471">3.000</tspan><tspan x="0" y="491">4.450</tspan><tspan x="0" y="511">3.750</tspan><tspan x="0" y="531">3.300</tspan></text>
          <text class="fl" transform="matrix(.74 0 0 1 360 0)"><tspan x="0" y="146">C30</tspan><tspan x="0" y="166">C30</tspan><tspan x="0" y="186">C30</tspan><tspan x="0" y="206">C30</tspan><tspan x="0" y="227">C30</tspan><tspan x="0" y="247">C30</tspan><tspan x="0" y="267">C30</tspan><tspan x="0" y="288">C30</tspan><tspan x="0" y="308">C30</tspan><tspan x="0" y="328">C30</tspan><tspan x="0" y="349">C30</tspan><tspan x="0" y="369">C30</tspan><tspan x="0" y="389">C35</tspan><tspan x="0" y="410">C40</tspan><tspan x="0" y="430">C40</tspan><tspan x="0" y="450">C40</tspan><tspan x="0" y="471">C40</tspan><tspan x="0" y="491">C40</tspan><tspan x="0" y="511">C40</tspan><tspan x="0" y="531">C40</tspan></text>
          <text class="flh" transform="scale(.72 1)"><tspan x="286" y="557">楼层号</tspan><tspan x="353">底标高(m)</tspan><tspan x="417">层高(m)</tspan><tspan x="500">墙砼强度等级</tspan></text>
          <text y="590" class="ttl" transform="matrix(.7 0 0 1 300 0)">层 高 表</text>
          <text y="610" class="flh sub" transform="matrix(.77 0 0 1 295 0)">嵌固端为地下一层顶</text>
          <path d="M189 452c-2 0-2 2-2 4v30c0 3 0 6 2 6M393 433c2 0 3 1 3 4v72c0 3-1 4-3 4M396 473h3" class="gr"/>
          <text transform="translate(175 472) rotate(-90) scale(.7 1)" class="vt">底部加强部位</text>
          <text transform="translate(412 475) rotate(-90) scale(.7 1)" class="vt">框架边缘构件</text>

          <!-- ucs -->
          <path class="ucs" d="M79.500 578V623M85 628.500H130M75.500 623.500h10v9h-10zM82 562l5 6 5-6M87 568v7M134 615l13 13M147 615l-13 13"/>
          <text x="68" y="147" class="vp">[−][俯视][二维线框]</text>

          <!-- diagonals -->
          <path d="M325 642L840 241M583 642L1108 276" class="bl"/>

          <!-- axis grid -->
          <path class="wh" d="M636 138H1325M636 170H1325M636 129V198M790 129V198M985 129V198M1243 129V198M634 140l4-4M790 140l2-3M985 140l2-3M634 172l4-4"/>
          <circle cx="636" cy="214" r="17" class="wc"/><circle cx="790" cy="214" r="17" class="wc"/><circle cx="985" cy="214" r="17" class="wc"/><circle cx="1243" cy="214" r="17" class="wc"/>
          <text class="ax" transform="matrix(.85 0 0 1 636 0)" x="0" y="224">1</text>
          <text class="ax" transform="matrix(.85 0 0 1 790 0)" x="0" y="224">2</text>
          <text class="ax" transform="matrix(.85 0 0 1 985 0)" x="0" y="224">5</text>
          <text class="ax" transform="matrix(.85 0 0 1 1243 0)" x="0" y="224">8</text>
          <text class="dimt" transform="matrix(.75 0 0 1 713 0)" x="0" y="134">5800</text>
          <text class="dimt" transform="matrix(.75 0 0 1 889 0)" x="0" y="134">1800</text>
          <text class="dimt" transform="matrix(.75 0 0 1 1114 0)" x="0" y="134">6550</text>
          <path d="M1065.500 129V197" class="ye"/>
          <path d="M1146 129v3M1155 129v3" class="mg1"/>
          <text class="yt" transform="matrix(.74 0 0 1 1067 0)"><tspan x="0" y="154">KL17(3) 200x400</tspan><tspan x="0" y="169">Φ8@100/200(2)</tspan><tspan x="0" y="182">2Φ20;3Φ20</tspan><tspan x="0" y="196">梁顶标高: 3.500</tspan></text>

          <!-- beam section -->
          <g class="gr">
            <path d="M561 318H670M563 318V340M668 318V353M508 337H703M512 337V516M508 516H558M596 353H703M701 337V355M512 426H453M558 407H599M537 464H567M540 426V464M437 414H493L481 426 468 414M632 309H683M632 309L615 342M635 392H682M635 392L593 361M635 392L602 343M635 392L570 379M635 392L590 379M613 449H662M613 449L581 480"/>
          </g>
          <path class="tk" d="M560 321l6-6M665 321l6-6M509 340l6-6M509 519l6-6M698 340l6-6M698 356l6-6M537 429l6-6M537 467l6-6M555 410l6-6M596 410l6-6"/>
          <path class="gy" d="M564 450L590 427M564 480L595 450M564 505L595 477M573 516L595 495"/>
          <path d="M563.500 340.500H668V353H596V516H563.500ZM453 426.500H596M453 446.500H563M563 446V516" class="cy"/>
          <path d="M453 418V426M453 446V455M444 435h12l-8 2h10" class="gy"/>
          <path d="M567 464V342H664V352M592 342V464" class="mg"/>
          <path d="M568 342h3v5h-3zM589 342h4v5h-4zM601 342h3v3h-3zM625 342h3v3h-3zM569 378h3v2h-3zM589 378h3v2h-3z" class="mgf"/>
          <text class="w15" transform="matrix(.75 0 0 1 616 0)" x="0" y="315">700</text>
          <text class="g14" transform="matrix(.68 0 0 1 660 0)" x="0" y="308">?8@120</text>
          <text class="g14" transform="matrix(.68 0 0 1 662 0)" x="0" y="392">?8@200</text>
          <text class="g14" transform="matrix(.75 0 0 1 580 0)" x="0" y="406">200</text>
          <text class="g14" transform="matrix(.7 0 0 1 460 0)" x="0" y="412">3.500</text>
          <text class="w15" transform="translate(508 382) rotate(-90) scale(.75 1)">700</text>
          <text class="w15" transform="translate(508 472) rotate(-90) scale(.75 1)">500</text>
          <text class="w15" transform="translate(697 350) rotate(-90) scale(.75 1)">100</text>
          <text class="w15" transform="translate(537 445) rotate(-90) scale(.75 1)">La</text>
          <text y="447" class="cg12" transform="matrix(.8 0 0 1 641 0)">梁洋平面图</text>
          <circle cx="611" cy="572" r="24" class="cyc"/><circle cx="611" cy="572" r="20.500" class="mgc"/>
          <text y="582" class="m1" transform="matrix(.6 0 0 1 611 0)">1</text>

          <!-- link-beam schedule -->
          <text y="314" class="cg18" transform="matrix(.78 0 0 1 797 0)">连梁配筋表</text>
          <path class="tbl" d="M757.500 323.500H1204.500V608H757.500ZM818.500 323V608M899.500 323V608M1002.500 323V608M1102.500 323V608M757 364.500H1205M757 389H1205M757 413H1205M757 437.500H1205M757 462H1205M757 486H1205M757 510.500H1205M757 534.500H1205M757 558.500H1205M757 584H1205"/>
          <text class="cg15" transform="scale(.85 1)"><tspan x="926" y="350">编号</tspan><tspan x="1011">梁截面bxh</tspan><tspan x="1118">上、下部纵筋</tspan><tspan x="1236">箍筋</tspan><tspan x="1356">备  注</tspan></text>
          <text class="rw" transform="matrix(.78 0 0 1 787 0)"><tspan x="0" y="382">LL1</tspan><tspan x="0" y="406">LL2</tspan><tspan x="0" y="431">LL3</tspan><tspan x="0" y="455">LL4</tspan><tspan x="0" y="480">LL5</tspan><tspan x="0" y="504" class="red">LL6</tspan><tspan x="0" y="528" class="red">LL7</tspan><tspan x="0" y="553">LL8</tspan><tspan x="0" y="577">LL9</tspan><tspan x="4" y="602">LL10</tspan></text>
          <text class="rw" transform="matrix(.78 0 0 1 859 0)"><tspan x="0" y="382">200x400</tspan><tspan x="0" y="406">200x500</tspan><tspan x="0" y="431">200x400</tspan><tspan x="0" y="455">200x400</tspan><tspan x="0" y="480">200x400</tspan><tspan x="-2" y="504">250x1200</tspan><tspan x="0" y="528">200x400</tspan><tspan x="0" y="553">250x500</tspan><tspan x="0" y="577">200x400</tspan><tspan x="0" y="602">250x600</tspan></text>
          <text class="rw" transform="matrix(.78 0 0 1 949 0)"><tspan x="0" y="382">2Φ20</tspan><tspan x="0" y="406">2Φ18</tspan><tspan x="0" y="431">3Φ16</tspan><tspan x="0" y="455">2Φ18</tspan><tspan x="0" y="480">4?18 2/2</tspan><tspan x="1" y="504">4Φ22 2/2</tspan><tspan x="0" y="528">3Φ18</tspan><tspan x="0" y="553">2?18</tspan><tspan x="0" y="577">3?18</tspan><tspan x="-1" y="602">3?18</tspan></text>
          <text class="rw" transform="matrix(.78 0 0 1 1047 0)"><tspan x="0" y="382">Φ10@100(2)</tspan><tspan x="0" y="406">Φ8@100(2)</tspan><tspan x="0" y="431">Φ8@100(2)</tspan><tspan x="0" y="455">Φ8@100(2)</tspan><tspan x="-4" y="480">?12@100(2)</tspan><tspan x="0" y="504">Φ12@100(2)</tspan><tspan x="0" y="528">Φ8@100(2)</tspan><tspan x="0" y="553">Φ8@100(2)</tspan><tspan x="0" y="577">Φ10@100(2)</tspan><tspan x="0" y="602">Φ12@100(2)</tspan></text>
          <text class="nt" transform="matrix(.8 0 0 1 1157 0)"><tspan x="0" y="504">梁顶标高:4.200m</tspan><tspan x="0" y="529">梁顶标高:3.570m</tspan><tspan x="0" y="603">梁顶标高:3.600m</tspan></text>

          <!-- right detail -->
          <path class="gr" d="M1257 282V464M1254 283H1308M1254 364H1308M1254 430H1308M1254 462H1308M1263 316H1325M1263 456H1325M1316 487H1325"/>
          <path class="tk" d="M1254 286l6-6M1254 367l6-6M1254 433l6-6M1254 465l6-6M1313 490l6-6"/>
          <path class="cy" d="M1316.500 283.500H1325M1316.500 283.500V462H1325M1316 430.500H1325"/>
          <path d="M1318 286V458" class="red4"/>
          <path d="M1317 286h8M1317 458h8M1323 431V450" class="red2"/>
          <path class="redf" d="M1320 288h4v4h-4zM1320 314h4v4h-4zM1320 341h4v4h-4z"/>
          <path class="wh" d="M1316 380l9-9M1316 398l9-9M1316 416l9-9M1316 430l9-9M1316.500 470V499"/>
          <path class="wh2" d="M1299 586H1325M1299 590.500H1325"/>
          <text class="w15" transform="translate(1254 324) rotate(-90) scale(.75 1)">500</text>
          <text class="w15" transform="translate(1254 397) rotate(-90) scale(.75 1)">400</text>
          <text class="w15" transform="translate(1254 445) rotate(-90) scale(.75 1)">200</text>
          <text class="g14" transform="matrix(.68 0 0 1 1285 0)" x="0" y="314">?8@200</text>
          <text class="g14" transform="matrix(.68 0 0 1 1285 0)" x="0" y="454">?8@200</text>
          <text class="w15l" transform="matrix(.75 0 0 1 1320 0)" x="0" y="494">2</text>
          <text class="w15l big" transform="matrix(.6 0 0 1 1316 0)" x="0" y="580">1</text>
        </svg>
        <div class="vscroll">
          <i class="up"></i>
          <i class="vthumb"></i>
          <i class="down"></i>
        </div>
      </div>
      <div class="hscroll">
        <i class="left"></i>
        <i class="hthumb"></i>
        <i class="right"></i>
      </div>
    </div>

    <div class="rightdock">
      <div class="vbar">
        <i class="hgrip"></i>
        <svg class="i" viewBox="0 0 16 16"><path d="M1 15h14" stroke="#333"/><path d="M4 11L12 2l3 2.500L7 13.500z" fill="#e8c090" stroke="#805020"/><path d="M2 14l1-4 4 3z" fill="#933" stroke="none"/></svg>
        <svg class="i" viewBox="0 0 16 16"><circle cx="4" cy="4" r="3" stroke="#444"/><path d="M8 3h4v3m-1.500-1l1.500 1.500L13.500 5" stroke="#222"/><circle cx="9.500" cy="11" r="3" stroke="#2a6ac8"/><circle cx="12" cy="13" r="2.800" stroke="#2a6ac8"/></svg>
        <svg class="i" viewBox="0 0 16 16"><path d="M8 0v16" stroke="#555" stroke-dasharray="2 1"/><path d="M6.500 3v10H1.500z" stroke="#333"/><path d="M9.500 3v10h5z" fill="#8ac0f0" stroke="#2a6ac8"/></svg>
        <svg class="i" viewBox="0 0 16 16"><path d="M1.500 13.500v-3c0-2 3-1 3-3s0-5 4-5 3 5 3 6h3v5z" stroke="#1a6ac8"/><path d="M.5 15.500h15M4 12c0-1.500 3-2 3-4s0-3 1.500-3 1 3.500 1 5 5-.5 5 2z" stroke="#333"/></svg>
        <svg class="i" viewBox="0 0 16 16"><path d="M1.500 1.500h6v6h-6z" stroke="#555"/><path d="M9.500 1.500h6v6h-6zM1.500 9.500h6v6h-6zM9.500 9.500h6v6h-6z" stroke="#2a6ac8"/><path d="M16 11v5h-5z" fill="#222"/></svg>
        <svg class="i" viewBox="0 0 16 16"><path d="M6.500 6.500h3v3h-3z" stroke="#444"/><path d="M8 0l2.500 3h-5zM8 16l2.500-3h-5zM0 8l3-2.500v5zM16 8l-3-2.500v5z" fill="#333" stroke="none"/></svg>
        <svg class="i" viewBox="0 0 16 16"><path d="M5 3.500a6.500 6.500 0 1 0 6-.5" stroke="#666" stroke-width="1.500"/><path d="M4 0v6l4-3z" fill="#333" stroke="none"/></svg>
        <svg class="i" viewBox="0 0 16 16"><path d="M1.500 1.500h14v14h-14z" fill="#8ac0f0" stroke="#2a6ac8" stroke-width="1.500"/><path d="M1.500 8.500h7v7h-7z" fill="#fff" stroke="#333"/></svg>
        <svg class="i" viewBox="0 0 16 16"><path d="M.5 1.500h9v14h-9z" fill="#fff" stroke="#444"/><path d="M9.500 1.500h3l3 14h-6" fill="#8ac0f0" stroke="#2a6ac8"/><path d="M3 10h7m-2-2l2 2-2 2" stroke="#222"/></svg>
        <svg class="i" viewBox="0 0 16 16"><path d="M0 8.500h4M11 8.500h1M14 8.500h2" stroke="#555"/><path d="M5 14L11 2" stroke="#1a6ac8" stroke-width="1.300"/><path d="M4 8.500h7" stroke="#1a6ac8"/></svg>
        <svg class="i" viewBox="0 0 16 16"><path d="M0 8.500h2M4 8.500h2" stroke="#555"/><path d="M7 8.500h5M8 14l6-12" stroke="#1a6ac8" stroke-width="1.300"/></svg>
        <svg class="i" viewBox="0 0 16 16"><path d="M.5 5.500l15-2M.5 14.500h15V12" stroke="#444"/><path d="M.5 5.500v9"  stroke="#444"/><path d="M11 1h4v3h-4z" fill="#1a6ac8" stroke="none"/></svg>
        <svg class="i" viewBox="0 0 16 16"><path d="M.5 5.500h15v10H.5z" fill="#fff" stroke="#444"/><path d="M2.500 3h3v3h-3zM10.500 3h3v3h-3z" fill="#1a6ac8" stroke="none"/></svg>
        <svg class="i" viewBox="0 0 16 16"><path d="M0 8h16" stroke="#1a6ac8"/><path d="M7 8L3.500 5.500v5zM9 8l3.500-2.500v5z" fill="#1a6ac8" stroke="none"/></svg>
        <svg class="i" viewBox="0 0 16 16"><path d="M.5 15.500V8L7 1.500h8.500v14z" fill="#f4f4f4" stroke="#444"/><path d="M.5 8L7 1.500" stroke="#1a6ac8" stroke-width="1.500"/></svg>
        <svg class="i" viewBox="0 0 16 16"><path d="M.5 15.500V9C.5 4 4 1.500 9 1.500h6.500v14z" fill="#f4f4f4" stroke="#444"/><path d="M.5 9C.5 4 4 1.500 9 1.500" stroke="#1a6ac8" stroke-width="1.500"/></svg>
        <svg class="i" viewBox="0 0 16 16"><path d="M2 14V9c2-4 4-4 6-1s3 3 6-3" stroke="#1a6ac8" stroke-width="1.300"/><path d="M1 13h2v2H1zM13 2h2v2h-2z" stroke="#333"/></svg>
        <svg class="i" viewBox="0 0 16 16"><path d="M1 9l4-3h10l-3 3v5.500H1zM1 9h11M15 6v5l-3 3.500M4 9v5M8 9v5" stroke="#2a6ac8" stroke-dasharray="3 1"/></svg>
      </div>
      <div class="vbar">
        <i class="hgrip"></i>
        <svg class="i" viewBox="0 0 16 16"><path d="M1.500 1.500h8v6h-8z" fill="#fff" stroke="#444"/><path d="M4.500 5.500h8v6h-8z" fill="#999" stroke="#444"/><path d="M7.500 9.500h8v6h-8z" fill="#fff" stroke="#444"/></svg>
        <svg class="i" viewBox="0 0 16 16"><path d="M7.500 9.500h8v6h-8z" fill="#999" stroke="#444"/><path d="M4.500 5.500h8v6h-8z" fill="#fff" stroke="#444"/><path d="M1.500 1.500h8v6h-8z" fill="#fff" stroke="#444"/></svg>
        <svg class="i" viewBox="0 0 16 16"><path d="M1.500 1.500h10v9h-10z" fill="#fff" stroke="#444"/><path d="M4.500 6.500h11v9h-11z" fill="#999" stroke="#444"/></svg>
        <svg class="i" viewBox="0 0 16 16"><path d="M4.500 6.500h11v9h-11z" fill="#999" stroke="#444"/><path d="M1.500 1.500h10v9h-10z" fill="#fff" stroke="#444"/></svg>
        <i class="vs"></i>
        <span class="abc">ABC<i></i></span>
      </div>
    </div>
  </div>

  <section class="cmd">
    <div class="cmdside">
      <i class="hgrip dark"></i>
      <b>✕</b>
      <svg width="16" height="16" viewBox="0 0 16 16"><path d="M2 1.500c3-1.500 5 .5 4 3.500l8 8-2 2-8-8C1.500 8 0 5 1.500 3L4 5.500 5 4.500z" fill="#fff"/></svg>
    </div>
    <div class="cmdmain">
      <div class="hist">
        <div>自动保存到 C:\Users\Administrator\appdata\local\temp\梁板_1_1_6038.sv$ ...</div>
        <div>命令:</div>
      </div>
      <div class="cmdin">
        <span class="prompt">&gt;_</span><i class="c dim"></i><span class="ph">键入命令</span>
      </div>
    </div>
  </section>

  <div class="layouttabs">
    <div class="ltab on"><span>模型</span></div>
    <div class="ltab"><span>布局1</span></div>
    <div class="ltab plus"><strong>+</strong></div>
  </div>

  <footer class="status">
    <span class="coords">3243686.4195, -109895.5300, 0.0000</span>
    <span class="st-model">模型</span>
    <svg class="i" viewBox="0 0 16 16"><path d="M1 2v12M4 2v12M7 2v12M10 2v12M13 2v12M0 4h14M0 7h14M0 10h14M0 13h14" stroke="#555"/></svg>
    <svg class="i" viewBox="0 0 16 16"><path d="M1 1.500h14M1 4.500h14M1 7.500h14M1 10.500h14M1 13.500h14" stroke="#555" stroke-dasharray="1 2"/></svg>
    <i class="c"></i>
    <svg class="i" viewBox="0 0 16 16"><path d="M6 13V2.500h5v2.500" stroke="#444"/><path d="M3.500 11h4v4h-4z" fill="#444" stroke="none"/></svg>
    <svg class="i" viewBox="0 0 16 16"><path d="M1 5h6M4 2v6" stroke="#444"/><path d="M7 11h9v3H7z" fill="#444" stroke="none"/></svg>
    <svg class="i" viewBox="0 0 16 16"><path d="M2.500 2v11.500H15" stroke="#555" stroke-width="1.300"/><path d="M2.500 9h4v4.500" stroke="#555"/></svg>
    <svg class="i" viewBox="0 0 16 16"><circle cx="7" cy="9" r="5.500" stroke="#444" stroke-width="1.300"/><path d="M7 9l7-6M7 9h5" stroke="#444"/></svg>
    <i class="c"></i>
    <svg class="i" viewBox="0 0 16 16"><path d="M2 1l12 14M8 0l-1 16M15 4L2 12" stroke="#666"/></svg>
    <i class="c"></i>
    <svg class="i" viewBox="0 0 16 16"><path d="M2 14.500L14 3M2 14.500h12" stroke="#1e90ff" stroke-width="1.300"/><circle cx="8" cy="9" r="1.500" fill="#1e90ff" stroke="none"/></svg>
    <svg class="i" viewBox="0 0 16 16"><path d="M2.500 3.500h11v12h-11z" stroke="#1e90ff" stroke-width="1.300"/><path d="M1 0h5v5H1z" fill="#22cc22" stroke="#222"/></svg>
    <i class="c"></i>
    <svg class="i" viewBox="0 0 16 16"><path d="M0 2h16v3H0zM0 7h11v3H0zM0 12h7v3H0z" fill="#1e90ff" stroke="none"/></svg>
    <svg class="i tr" viewBox="0 0 16 16"><path d="M1 1h14v14H1z"/></svg>
    <svg class="i" viewBox="0 0 16 16"><path d="M1 4h5M3.500 1.500v5" stroke="#444"/><path d="M6 5h6v2H6z" fill="#888" stroke="none"/><path d="M6 7h9v8H6z" fill="#8fb070" stroke="none"/></svg>
    <svg class="i" viewBox="0 0 16 16"><path d="M2 3.500L8 1.500l6 2v8l-6 3.500-6-3.500zM2 3.500l6 3 6-3M8 6.500v8" stroke="#444" stroke-width="1.200"/><path d="M0 0h5v5H0z" fill="#22cc22" stroke="#222"/></svg>
    <i class="c"></i>
    <svg class="i" viewBox="0 0 16 16"><path d="M3 1v13h12M3 14l7-7" stroke="#1e90ff" stroke-width="1.300"/><path d="M10 0L7 6h3l-2 5 5-7h-3l2-4z" fill="#1e90ff" stroke="none"/></svg>
    <svg class="i" viewBox="0 0 16 16"><path d="M2 4l6-3 6 3v8l-6 3-6-3zM2 4l6 3 6-3M8 7v8" stroke="#aaa"/></svg>
    <i class="c"></i>
    <svg class="i" viewBox="0 0 16 16"><path d="M8 1L2 11l6 4 6-4z" stroke="#555"/><path d="M2 11l6-3 6 3" stroke="#555"/><circle cx="3" cy="12" r="1.800" stroke="#2a9a2a"/><circle cx="13" cy="12" r="1.800" stroke="#c03030"/><circle cx="8" cy="5" r="1.800" stroke="#2a6ac8"/></svg>
    <i class="c"></i>
    <svg class="i" viewBox="0 0 16 16"><circle cx="9" cy="3" r="2.500" stroke="#1e90ff" stroke-width="1.500"/><path d="M7 5L2 16h3l3-7 3 7h3L10 5z" fill="#1e90ff" stroke="none"/></svg>
    <svg class="i" viewBox="0 0 16 16"><path d="M7 5L2 16h3l3-7 3 7h3L10 5z" fill="#555" stroke="none"/><path d="M3 1l3 3-1.500 2M12 1l-1 3-3 3" stroke="#555" stroke-width="1.300"/></svg>
    <svg class="i" viewBox="0 0 16 16"><path d="M8 1l-2 7-5 8h4l3-5 3 5h4l-5-8z" fill="#555" stroke="none"/></svg>
    <span class="scale">1:1 / 100%</span>
    <i class="c"></i>
    <svg class="i" viewBox="0 0 16 16"><path d="M7 1h2l.5 2 1.700.7L13 2.700 14.300 4l-1 1.800.7 1.700 2 .5v2l-2 .5-.7 1.700 1 1.800L13 15.300l-1.800-1-1.700.7-.5 2h-2l-.5-2-1.700-.7-1.800 1L1.700 14l1-1.800-.7-1.700-2-.5V8l2-.5.7-1.700-1-1.800L3 2.700l1.800 1 1.700-.7z" fill="#666" stroke="none" transform="translate(1 1) scale(.85)"/><circle cx="8" cy="8" r="2" fill="#eee" stroke="none"/></svg>
    <i class="c"></i>
    <svg class="i" viewBox="0 0 16 16"><path d="M8 1v14M1 8h14" stroke="#666" stroke-width="1.600"/></svg>
    <svg class="i" viewBox="0 0 16 16"><path d="M6 0h5v16H6z" fill="#666" stroke="none"/><path d="M8 2h3M8 5h3M8 8h3M8 11h3M8 14h3" stroke="#eee"/></svg>
    <span class="unit">小数</span>
    <i class="c"></i>
    <svg class="i" viewBox="0 0 16 16"><path d="M3.500 1.500h9v13h-9z" fill="#eee" stroke="#666"/><path d="M5 3h6v3H5zM5 8h2v1.500H5zM9 8h2v1.500H9zM5 11h2v1.500H5zM9 11h2v1.500H9z" fill="#666" stroke="none"/></svg>
    <svg class="i" viewBox="0 0 16 16"><path d="M1 1h13v3H1zM.5 1v13h5M14 4v3" stroke="#444"/><path d="M8 9h7v6.500H8z" fill="#eee" stroke="#444"/><path d="M11 11h1.500v3H11z" fill="#222" stroke="none"/></svg>
    <i class="c"></i>
    <svg class="i" viewBox="0 0 16 16"><path d="M1 1h6v6H1z" stroke="#555"/><circle cx="12" cy="5" r="3.500" stroke="#555"/><path d="M4.500 9l3.500 6.500H1z" stroke="#555"/></svg>
    <span class="bluecirc">✓</span>
    <svg class="i" viewBox="0 0 16 16"><path d="M2 .5h8l3 3V9H2z" fill="#cfe0f4" stroke="#555"/><path d="M2 7h9v8H2z" fill="#f0d040" stroke="#a08020"/><path d="M7 11l2.500 3.500L15 7" stroke="#2a9a2a" stroke-width="2"/></svg>
    <svg class="i" viewBox="0 0 16 16"><path d="M.5 1.500h15v13H.5z" fill="#fff" stroke="#555"/><path d="M3 12l4-4M3 12V9.500M3 12h2.500M13 4L9 8M13 4v2.500M13 4h-2.500" stroke="#333"/></svg>
    <svg class="i" viewBox="0 0 16 16"><path d="M1 2.500h14M1 8h14M1 13.500h14" stroke="#555" stroke-width="2.200"/></svg>
  </footer>
</div>
</body>
</html>
```
FILE: styles.css
```css
*{box-sizing:border-box}
html,body{margin:0;padding:0}
body{display:flex;width:1374px;height:768px;overflow:hidden;background:#f0f0f0;font-family:"Noto Sans","Noto Sans CJK SC",sans-serif;font-size:12px;color:#222}
i,em,b,strong{font-style:normal;display:block}
.defs{position:absolute}
.desk{width:8px;flex:none;line-height:0}
.app{position:relative;width:1366px;flex:none;display:flex;flex-direction:column;height:768px}

.i{width:16px;height:16px;display:block;fill:none;stroke:#333;stroke-width:1;justify-self:center;align-self:center;overflow:visible;flex:none}
.c{width:0;height:0;border-left:4px solid transparent;border-right:4px solid transparent;border-top:4px solid #222;justify-self:center;align-self:center;flex:none}
.c.dim{border-top-color:#aaa}
.c.lite{border-top-color:#ddd;border-left-width:5px;border-right-width:5px;border-top-width:5px}
.mini{font:700 9px "Liberation Sans",sans-serif;text-anchor:middle;fill:#333;stroke:none}

.logo{position:absolute;left:0;top:0;width:40px;height:41px;background:linear-gradient(#9a9a9a,#6a6a6a 45%,#3c3c3c);border:1px solid #222;z-index:5;display:flex;align-items:center;padding-left:4px;gap:1px}

.titlebar{height:24px;display:flex;flex:none;border-bottom:1px solid #cfd8d8;background:#c8c8c8}
.qat{width:393px;margin-left:40px;background:#c9c9c9;display:grid;grid-template-columns:26px 24px 23px 24px 25px 22px 14px 22px 14px 180px 15px;align-items:center;padding-left:4px}
.qcombo{height:20px;gap:2px;justify-content:flex-start;padding:0 3px 0 1px;margin:0}
.qcombo span{font-size:13px;color:#111}
.qcombo .c{margin-left:auto}
.qmore{display:flex;flex-direction:column;align-items:center;gap:2px}
.qmore .bar{width:8px;height:1px;background:#222}
.wintitle{width:367px;background:linear-gradient(90deg,#a5ced6,#9cc0c6 25%,#7e9e9e 60%,#56706e);display:flex;padding-left:78px;gap:15px;align-items:center;font:12px "DejaVu Sans","Noto Sans CJK SC",sans-serif;letter-spacing:-.2px;color:#222}
.info{width:443px;background:#cdcdcd;display:flex;align-items:center;position:relative}
.arrowbox{width:13px;height:23px;display:flex;align-items:center;justify-content:center;background:#d8d8d8}
.tri-r{width:0;height:0;border-top:4px solid transparent;border-bottom:4px solid transparent;border-left:4px solid #333}
.search{width:180px;height:21px;background:#fff;border:1px solid #000;font:italic 11px/19px "Noto Sans CJK SC",sans-serif;color:#888;padding-left:3px}
.ibino{margin-left:4px}
.iuser{margin-left:7px}
.login{margin-left:5px;font-size:13px;color:#222}
.c1{margin-left:59px;border-top-color:#666;border-left-width:3px;border-right-width:3px}
.ix{margin-left:8px}
.ia{margin-left:9px}
.c2{margin-left:3px;border-top-color:#666;border-left-width:3px;border-right-width:3px}
.vsep{width:1px;height:18px;background:#bbb;margin-left:8px}
.qhelp{margin-left:9px;width:16px;height:16px;border:1.500px solid #2a5aa8;border-radius:50%;color:#2a5aa8;font:700 12px/14px "Liberation Sans",sans-serif;text-align:center;background:#fff}
.c3{margin-left:5px;border-top-color:#666;border-left-width:3px;border-right-width:3px}
.winctrl{flex:1;background:linear-gradient(90deg,#6f827d,#8c9c94);display:flex;padding-left:17px;align-items:flex-start}
.wbtn{height:17px;display:flex;align-items:center;justify-content:center;border:1px solid #555;border-top:0;color:#fff}
.wmin{width:29px;background:linear-gradient(#8e9a9c,#aab4b6);border-radius:0 0 0 4px}
.wmin i{width:11px;height:4px;background:#eee;margin-top:3px;border:1px solid #889}
.wres{width:27px;background:linear-gradient(#8e9a9c,#aab4b6)}
.wclose{width:50px;background:linear-gradient(#c05a50,#b8392c 60%,#d06a58);font-size:13px;font-weight:700}

.menubar{height:21px;flex:none;display:flex;align-items:center;background:linear-gradient(#4c4c4c,#707070 40%,#5e5e5e);color:#e4e4e4;padding-left:55px;position:relative}
.m{width:63px;font-size:12px;white-space:nowrap;line-height:1;margin-top:-2px}
.m:nth-child(1){width:62px}
.m:nth-child(3){width:64px}
.m:nth-child(4){width:60px}
.m:nth-child(5){width:66px}
.m:nth-child(7){width:65px}
.m:nth-child(8){width:66px}
.m:nth-child(9){width:69px}
.m:nth-child(10){width:62px}
.m:nth-child(11){width:68px}
.mdi{margin-left:auto;display:flex;align-items:center;gap:6px;padding-right:7px;color:#222}
.mdi-min{width:10px;height:2px;background:#222;margin-top:8px}
.mdi b{font-size:12px}

.tabbar{height:25px;flex:none;background:#b0b0b0;display:flex;align-items:flex-end;padding-left:22px}
.tab{position:relative;height:23px;display:flex;align-items:center;justify-content:space-between;color:#666;font-size:12px;z-index:0;flex:none}
.tab::before{content:"";position:absolute;inset:0;background:linear-gradient(#c4c4c4,#cfcfcf);border-radius:8px 8px 0 0;transform:perspective(40px) rotateX(14deg);transform-origin:bottom;z-index:-1}
.tab em{font-size:15px;font-weight:700;color:#888;line-height:1}
.tab.on{color:#222;z-index:1}
.tab.on::before{background:linear-gradient(#fff,#f0f0f0)}
.t0{width:124px;padding-left:10px}
.t1{width:120px;padding:0 10px 0 9px}
.t2{width:122px;padding:0 7px 0 12px}
.t3{width:132px;padding:0 7px 0 13px}
.t4{width:23px;margin-left:11px;justify-content:center;color:#444}
.t4 strong{font-size:15px}

.tbarea{height:59px;flex:none;background:#f0f0f0;padding-top:4px;display:flex;flex-direction:column;gap:2px;overflow:hidden}
.tb{height:25px;border:2px solid #6e6e6e;display:grid;align-items:center;background:#f0f0f0}
.row1{width:1245px;grid-template-columns:7px 22px 24px 22px 8px 20px 24px 23px 23px 8px 21px 24px 22px 24px 21px 8px 23px 12px 24px 12px 6px 24px 22px 23px 22px 8px 22px 24px 22px 24px 22px 22px 10px 18px 14px 21px 120px 6px 23px 120px 6px 24px 119px 6px 24px 1fr}
.row2{width:1366px;border-right:0;grid-template-columns:7px 22px 23px 23px 23px 23px 23px 7px 24px 22px 23px 22px 10px 175px 23px 23px 12px 21px 302px 22px 23px 23px 11px 148px 8px 157px 9px 122px 9px 1fr}
.grip{height:21px;width:7px;background:conic-gradient(#555 25%,transparent 0) 2px 0/2px 2px,#9c9c9c}
.grip2{height:21px;width:100%;background:conic-gradient(#555 25%,transparent 0) 0 0/2px 2px content-box,#8c8c8c;padding:0 3px}
.s{width:1px;height:20px;background:#222;justify-self:center}
.s2{width:2px;background:#555}
.dbl{width:6px;background:none;border-left:1px solid #333;border-right:1px solid #333}
.combo{height:21px;border:1px solid #b8b8b8;border-radius:3px;background:linear-gradient(#f6f6f6,#eee 50%,#d8d8d8 52%,#e2e2e2);display:flex;align-items:center;justify-content:flex-end;padding:0 5px;min-width:0;overflow:hidden;margin-right:1px}
.tcombo{justify-content:space-between;padding-left:8px}
.tcombo span{font-size:13px;color:#111}
.lcombo{justify-content:flex-start;gap:1px;padding-left:1px}
.lcombo .c,.bcombo .c{margin-left:auto}
.sw{width:10px;height:10px;background:#0099cc;border:1px solid #333;flex:none}
.lcombo .sw{margin-left:1px}
.laytxt{font:12.500px "DejaVu Sans",sans-serif;margin-left:3px;color:#111;letter-spacing:.15px}
.bcombo{justify-content:flex-start;font:10px "DejaVu Serif",serif;color:#222;padding-left:3px;white-space:nowrap}
.bcombo span{margin-left:4px}
.ln{height:1px;background:#111;flex:none}
.l60{width:59px}
.l60+span{margin-left:5px}
.l35{width:35px}
.l35+span{margin-left:5px}
.off{color:#999;border-radius:3px 0 0 3px}
.helpbox{width:14px;height:15px;border:1.500px solid #333;font:700 11px/12px "Liberation Sans",sans-serif;text-align:center;background:#fff;justify-self:center}
.glyph{position:relative;font:20px/22px "Liberation Serif",serif;color:#222;justify-self:center;width:16px}
.glyph .over{position:absolute;left:2px;top:3px}

.work{height:531px;flex:none;display:flex}
.leftdock{width:57px;flex:none;display:flex;gap:3px;align-items:flex-start;background:#f0f0f0}
.vbar{width:25px;border:2px solid #777;background:#f0f0f0;border-bottom-width:1px;display:flex;flex-direction:column;align-items:center;gap:5.700px;padding-bottom:3px;flex:none}
.vbar .i{align-self:center}
.hgrip{width:100%;height:8px;background:conic-gradient(#444 25%,transparent 0) 0 0/2px 2px content-box,#9c9c9c;padding:2px 4px;margin-bottom:-1.700px;flex:none}
.hgrip.dark{background:conic-gradient(#aaa 25%,transparent 0) 0 0/2px 2px content-box,#8a8a8a;height:18px;padding:5px 2px;margin-bottom:0}
.vs{width:19px;height:1px;background:#aaa;flex:none}
.bigA{font:700 20px/16px "Liberation Sans",sans-serif;color:#333;height:16px}
.abc{height:16px;width:16px;font:700 7px/9px "DejaVu Sans Mono",monospace;position:relative;color:#222;text-align:center}
.abc i{position:absolute;left:1px;right:0;bottom:0;height:5px;border:1px solid #222;border-top:0}
.center{width:1280px;flex:none;display:flex;flex-direction:column}
.viewrow{height:513px;display:flex;flex:none}
.cad{display:block;flex:none;font-family:"Liberation Sans","Noto Sans CJK SC",sans-serif}
.vscroll{width:20px;background:#f0f0f0;position:relative;flex:none}
.up,.down,.left,.right{position:absolute;width:0;height:0}
.up{left:5px;top:6px;border-left:4px solid transparent;border-right:4px solid transparent;border-bottom:4px solid #333}
.down{left:5px;bottom:5px;border-left:4px solid transparent;border-right:4px solid transparent;border-top:4px solid #333}
.vthumb{position:absolute;left:1px;top:371px;width:14px;height:15px;border:1px solid #aaa;border-radius:2px;background:linear-gradient(90deg,#fafafa,#ccc)}
.hscroll{height:18px;background:#f0f0f0;position:relative;flex:none}
.left{left:5px;top:5px;border-top:4px solid transparent;border-bottom:4px solid transparent;border-right:4px solid #333}
.right{left:1249px;top:5px;border-top:4px solid transparent;border-bottom:4px solid transparent;border-left:4px solid #333}
.hthumb{position:absolute;left:60px;top:1px;width:15px;height:15px;border:1px solid #aaa;border-radius:2px;background:linear-gradient(#fafafa,#ccc)}
.rightdock{width:29px;flex:none;padding-left:1px;display:flex;flex-direction:column;gap:0;background:#f0f0f0}
.rightdock .vbar:first-child{height:405px}
.rightdock .vbar:last-child{height:126px;border-bottom:0}

.cmd{height:58px;flex:none;display:flex;margin-top:2px;background:#c6c6c6;border-top:1px solid #777}
.cmdside{width:23px;flex:none;background:linear-gradient(#4a4a4a,#666);display:flex;flex-direction:column;align-items:center;color:#fff}
.cmdside b{font-size:13px;height:15px;line-height:14px;margin-top:-3px}
.cmdside svg{margin-top:7px}
.cmdmain{flex:1;display:flex;flex-direction:column}
.hist{height:34px;padding:2px 0 0 2px;font:12px/15px "DejaVu Sans Mono","Noto Sans CJK SC",monospace;letter-spacing:-.12px;color:#111}
.cmdin{height:23px;background:#fff;border-top:1px solid #777;border-bottom:1px solid #777;display:flex;align-items:center;padding-left:5px}
.prompt{width:14px;height:14px;border:1px solid #999;background:#e4e4e4;font:9px/12px "DejaVu Sans Mono",monospace;text-align:center;color:#222;margin-right:3px}
.cmdin .c{border-left-width:3px;border-right-width:3px;margin:0 7px 0 1px}
.ph{font:italic 12px "Noto Sans CJK SC",sans-serif;color:#aaa}

.layouttabs{height:20px;flex:none;background:#b0b0b0;display:flex;padding-left:13px;padding-top:0}
.ltab{position:relative;height:19px;width:46px;display:flex;align-items:center;justify-content:center;font-size:12.500px;color:#666;z-index:0}
.ltab+.ltab{width:58px;padding-right:5px}
.ltab::before{content:"";position:absolute;inset:0;background:linear-gradient(#c8c8c8,#e0e0e0);border-radius:0 0 8px 8px;transform:perspective(30px) rotateX(-10deg);transform-origin:top;z-index:-1}
.ltab.on{color:#111;z-index:1}
.ltab.on::before{background:linear-gradient(#fff,#f0f0f0)}
.ltab.plus{width:21px;padding:0;color:#444}
.ltab.plus strong{font-size:14px}

.status{height:28px;flex:none;margin-left:71px;background:#ececec;display:grid;align-items:center;grid-template-columns:248px 26px 24px 23px 21px 24px 25px 25px 20px 20px 20px 19px 23px 22px 20px 22px 25px 25px 23px 21px 23px 22px 19px 19px 22px 24px 23px 23px 65px 14px 28px 14px 28px 24px 57px 20px 22px 30px 10px 28px 26px 26px 28px 22px;padding:0 2px 2px 0;box-shadow:-71px 0 0 #b0b0b0}
.coords{padding-left:29px;white-space:nowrap;line-height:1}
.st-model{font-weight:500;font-size:13px;color:#111;white-space:nowrap;line-height:1}
.tr{stroke:none;fill:#1e90ff;background:conic-gradient(#1e90ff 25%,#bfe0ff 0 50%,#1e90ff 0 75%,#bfe0ff 0) 0 0/4px 4px}
.tr path{fill:none;stroke:#1e90ff}
.scale{white-space:nowrap;font-size:12.500px;padding-left:5px;letter-spacing:-.3px;line-height:1}
.unit{padding-left:6px;font-size:13px;line-height:1}
.bluecirc{width:14px;height:18px;border-radius:50%;background:#0a5aa8;color:#8ac8ff;font-size:9px;line-height:18px;text-align:center;box-shadow:0 0 2px #5aa0e8;justify-self:center}

/* drawing */
.frame{fill:none;stroke:#4a5a98;stroke-width:5}
.pu{fill:none;stroke:#8f00c0;stroke-width:1}
.pu2{fill:none;stroke:#9500cc;stroke-width:2}
.wl{stroke:#d8c8d8;stroke-width:2}
.fl,.flh{fill:#b02a00;text-anchor:middle}
.fl{font-size:13.500px}
.flh{font-size:10.500px;font-weight:700;font-family:"Noto Sans CJK SC",sans-serif}
.sub{font-size:11px;font-weight:400;fill:#c02800}
.ttl{fill:#e8e8e8;font:300 21px "Noto Sans CJK SC",sans-serif;text-anchor:middle;letter-spacing:4px}
.gr{fill:none;stroke:#00e800;stroke-width:1}
.vt{fill:#00e000;font:700 10px "Noto Sans CJK SC",sans-serif;text-anchor:middle}
.ucs{fill:none;stroke:#f0f0f0;stroke-width:1}
.vp{fill:#d0d0d0;font:12px "Noto Sans","Noto Sans CJK SC",sans-serif}
.bl{fill:none;stroke:#0000ff;stroke-width:1.200}
.wh{fill:none;stroke:#e8e8e8;stroke-width:1}
.wh2{fill:none;stroke:#f4f4f4;stroke-width:1.500}
.wc{fill:#000;stroke:#e0e0e0;stroke-width:1}
.ax{fill:#e8e8e8;font:100 29px Roboto,"Liberation Sans",sans-serif;text-anchor:middle}
.dimt{fill:#ddd;font-size:15px;text-anchor:middle}
.ye{fill:none;stroke:#e8e800}
.mg1{fill:none;stroke:#ff00ff}
.yt{fill:#f0f000;font-size:15px}
.tk{fill:none;stroke:#00ff00;stroke-width:2}
.cy{fill:none;stroke:#00e0e8;stroke-width:1.300}
.gy{fill:none;stroke:#707070;stroke-width:1}
.mg{fill:none;stroke:#ff00e8;stroke-width:3}
.mgf{fill:#ff00e8}
.w15{fill:#e8e8e8;font-size:16px;text-anchor:middle}
.w15l{fill:#eee;font-size:16px}
.w15l.big{font-size:24px}
.g14{fill:#00ee00;font-size:16px;text-anchor:middle}
.cg12{fill:#00e800;font:700 11px "Noto Sans CJK SC",sans-serif;text-anchor:middle}
.cg18{fill:#00e800;font:18px "Noto Sans CJK SC",sans-serif;text-anchor:middle}
.cyc{fill:none;stroke:#00d8e0;stroke-width:1.500}
.mgc{fill:none;stroke:#e800e0;stroke-width:1.500}
.m1{fill:#e800e0;font:100 26px Roboto,"Liberation Sans",sans-serif;text-anchor:middle}
.tbl{fill:none;stroke:#00e800;stroke-width:1.500}
.cg15{fill:#00e800;font-family:"Noto Sans CJK SC",sans-serif;font-size:15px;text-anchor:middle}
.rw{fill:#00e800;font-size:15.500px;text-anchor:middle}
.rw .red{fill:#e80000}
.nt{fill:#00e800;text-anchor:middle;font:500 12px "Liberation Sans","Noto Sans CJK SC",sans-serif}
.red4{fill:none;stroke:#ff0000;stroke-width:3}
.red2{fill:none;stroke:#ff0000;stroke-width:2}
.redf{fill:#ff0000}
```
